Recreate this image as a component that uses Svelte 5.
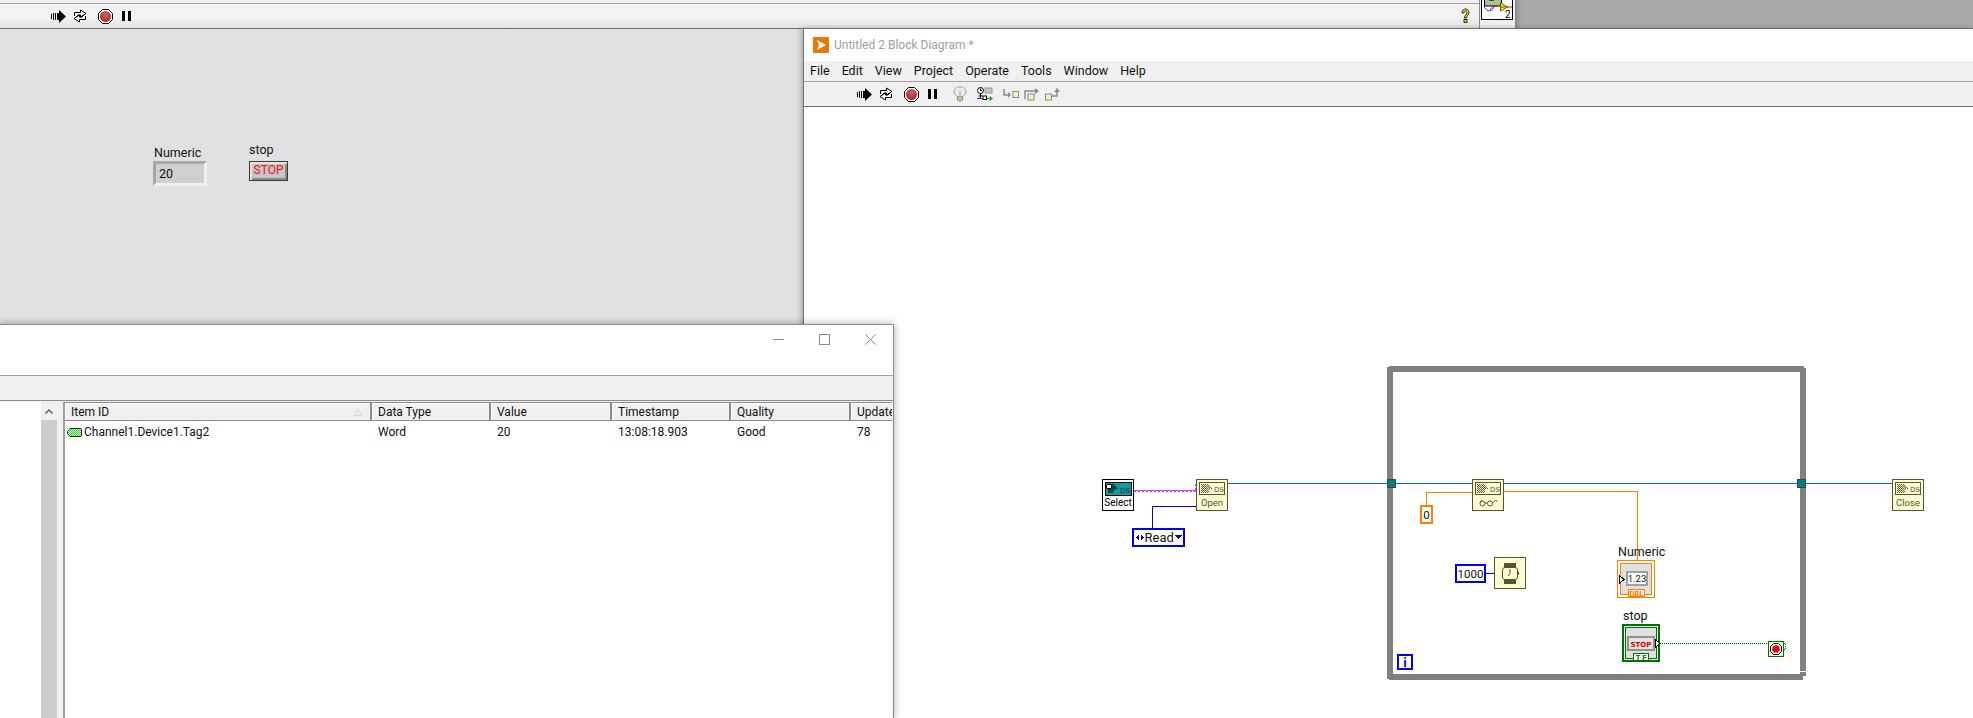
<script>
  const menus = ['File', 'Edit', 'View', 'Project', 'Operate', 'Tools', 'Window', 'Help'];
  const columns = ['Item ID', 'Data Type', 'Value', 'Timestamp', 'Quality', 'Update'];
  const row = ['Channel1.Device1.Tag2', 'Word', '20', '13:08:18.903', 'Good', '78'];
</script>

<svg class="defs" aria-hidden="true">
  <defs>
    <radialGradient id="stopFill" cx="50%" cy="30%" r="70%">
      <stop offset="0" stop-color="#d9605a" />
      <stop offset="1" stop-color="#a82a28" />
    </radialGradient>
    <pattern id="hatch" width="2" height="2" patternUnits="userSpaceOnUse">
      <rect width="2" height="2" fill="#fdfdcf" />
      <rect width="1" height="1" fill="#55553a" />
      <rect x="1" y="1" width="1" height="1" fill="#55553a" />
    </pattern>
    <pattern id="tagHatch" width="2" height="2" patternUnits="userSpaceOnUse">
      <rect width="2" height="2" fill="#3fd43f" />
      <rect width="1" height="1" fill="#c4f5c4" />
      <rect x="1" y="1" width="1" height="1" fill="#c4f5c4" />
    </pattern>
    <symbol id="run" viewBox="0 0 15 13">
      <path d="M0 4h1v5H0zM2 3h1v7H2zM4 3h1v7H4zM6 3h2V0l7 6.500-7 6.500v-3H6z" fill="#000" />
    </symbol>
    <symbol id="loop" viewBox="0 0 16 14">
      <path d="M2.500 7V3.500H8.500V1L14 4.500 8.500 8V6H6L3.500 8.500M13.500 7v3.500H7.500V13L2 9.500 7.500 6v2H10l2.500-2.500" fill="#fff" stroke="#000" />
    </symbol>
    <symbol id="stop" viewBox="0 0 15 15">
      <path d="M4.500.5h6l4 4v6l-4 4h-6l-4-4v-6z" fill="#fff" stroke="#000" />
      <circle cx="7.500" cy="7.500" r="5.500" fill="url(#stopFill)" />
    </symbol>
    <symbol id="pause" viewBox="0 0 9 10">
      <path d="M0 0h3v10H0zM6 0h3v10H6z" fill="#000" />
    </symbol>
    <symbol id="bulb" viewBox="0 0 14 16">
      <path d="M4.500 11C3 9 1 8 1 5.500 1 3 3.500 1 7 1s6 2 6 4.500C13 8 11 9 9.500 11z" fill="#ececec" stroke="#9a9a9a" />
      <path d="M6 5l1 5 1-5" fill="none" stroke="#c0c0c0" />
      <path d="M4.500 11h5v3h-5z" fill="#e8d890" stroke="#8a8a6a" />
      <path d="M5.500 15h3" stroke="#888" />
    </symbol>
    <symbol id="probe" viewBox="0 0 16 14">
      <circle cx="3.500" cy="3.500" r="3" fill="#fff" stroke="#000" />
      <path d="M3.500 1.500v2h1.500M3.500 6.500V11M1.500 9h4" fill="none" stroke="#000" />
      <rect x="8" y="1" width="7" height="5" fill="#c4c4c4" stroke="#9a9a9a" />
      <rect x="6" y="9" width="3.500" height="3.500" fill="#fff" stroke="#000" />
      <path d="M0 11.500h6" stroke="#2030c0" />
      <path d="M9.500 11.500h3" stroke="#109010" />
      <path d="M12.500 9l3.500 2.500-3.500 2.500z" fill="#10a010" />
    </symbol>
    <symbol id="stepInto" viewBox="0 0 16 12">
      <path d="M1 1v6h5" fill="none" stroke="#8a8a8a" stroke-width="1.500" />
      <path d="M5 4l3 3-3 3z" fill="#8a8a8a" />
      <rect x="10" y="3.500" width="5.500" height="6" fill="#f6f2b8" stroke="#8a8a8a" />
    </symbol>
    <symbol id="stepOver" viewBox="0 0 16 13">
      <path d="M1 11V3h10" fill="none" stroke="#8a8a8a" stroke-width="1.500" />
      <path d="M11 0l4 3-4 3z" fill="#8a8a8a" />
      <rect x="4" y="6" width="6" height="6" fill="#f6f2b8" stroke="#8a8a8a" />
    </symbol>
    <symbol id="stepOut" viewBox="0 0 16 13">
      <rect x="0.500" y="6" width="6" height="6" fill="#f6f2b8" stroke="#8a8a8a" />
      <path d="M7 8h5V3" fill="none" stroke="#8a8a8a" stroke-width="1.500" />
      <path d="M9 4l3-4 3 4z" fill="#8a8a8a" />
    </symbol>
    <symbol id="help" viewBox="0 0 9 16">
      <path d="M1 5C1 2 3 1 4.500 1 7 1 8 3 8 4.500 8 7 5.500 7.500 5.500 10H3.500C3.500 7 6 6.500 6 4.500 6 3.500 5.500 3 4.500 3 3.500 3 3 4 3 5z" fill="#f0e020" stroke="#000" stroke-width=".8" />
      <rect x="3" y="11.500" width="3" height="3" fill="#f0e020" stroke="#000" stroke-width=".8" />
    </symbol>
    <symbol id="dsIcon" viewBox="0 0 26 13" overflow="visible">
      <rect x=".5" y=".5" width="25" height="12" fill="none" stroke="#55553a" />
      <path d="M2 2h7l2 2 3 2.500-3 1-2 3.500H2z" fill="url(#hatch)" />
      <text x="15" y="10" class="ds">DS</text>
    </symbol>
  </defs>
</svg>

<div class="desktop">
  <div class="front-panel">
    <div class="fp-strip"></div>
    <div class="fp-toolbar">
      <div class="tools">
        <svg class="i15" viewBox="0 0 15 13"><use href="#run" /></svg>
        <svg class="i16 gap-6" viewBox="0 0 16 14"><use href="#loop" /></svg>
        <svg class="i-stop gap-10" viewBox="0 0 15 15"><use href="#stop" /></svg>
        <svg class="i-pause gap-9" viewBox="0 0 9 10"><use href="#pause" /></svg>
      </div>
      <svg class="i-help" viewBox="0 0 9 16"><use href="#help" /></svg>
      <div class="vi-cell">
        <svg class="vi-icon" viewBox="0 0 32 20">
          <rect x=".5" y="-5" width="31" height="24.500" fill="#fff" stroke="#000" />
          <rect x="3.500" y="-4" width="17" height="10" fill="#b4b89c" stroke="#000" />
          <rect x="8" y="-1" width="5" height="2" fill="#107010" />
          <path d="M3 6.500c3 6 9 6 10-1" fill="none" stroke="#2030b0" />
          <path d="M9 10c2-4 4-4 7-3.500" fill="none" stroke="#d02020" />
          <path d="M19.500 3l7 4-7 4z" fill="#f0f000" stroke="#606000" />
          <path d="M26 7h5M20 7h4" stroke="#d02020" />
          <text x="24" y="18" class="vi-num">2</text>
        </svg>
      </div>
    </div>
    <div class="fp-canvas">
      <div class="control numeric">
        <span class="caption">Numeric</span>
        <div class="num-box">20</div>
      </div>
      <div class="control stop-ctl">
        <span class="caption">stop</span>
        <div class="stop-btn">STOP</div>
      </div>
    </div>
  </div>

  <div class="block-diagram">
    <div class="bd-title">
      <svg class="lv-logo" viewBox="0 0 16 16">
        <rect width="16" height="16" fill="#e9780c" />
        <path d="M4 3l9 5-9 5 2-5z" fill="#fff" />
      </svg>
      <span>Untitled 2 Block Diagram *</span>
    </div>
    <div class="bd-menu">
      {#each menus as m}
        <span class="menu-item">{m}</span>
      {/each}
    </div>
    <div class="bd-toolbar">
      <svg class="i15" viewBox="0 0 15 13"><use href="#run" /></svg>
      <svg class="i16 gap-6" viewBox="0 0 16 14"><use href="#loop" /></svg>
      <svg class="i-stop gap-10" viewBox="0 0 15 15"><use href="#stop" /></svg>
      <svg class="i-pause gap-9" viewBox="0 0 9 10"><use href="#pause" /></svg>
      <svg class="i-bulb" viewBox="0 0 14 16"><use href="#bulb" /></svg>
      <svg class="i-probe" viewBox="0 0 16 14"><use href="#probe" /></svg>
      <svg class="i-step first" viewBox="0 0 16 12"><use href="#stepInto" /></svg>
      <svg class="i-step" viewBox="0 0 16 13"><use href="#stepOver" /></svg>
      <svg class="i-step" viewBox="0 0 16 13"><use href="#stepOut" /></svg>
    </div>

    <svg class="diagram" viewBox="804 107 1169 611" width="1169" height="611" shape-rendering="crispEdges">
      <!-- while loop frame -->
      <rect x="1390" y="369" width="413" height="308" fill="none" stroke="#808080" stroke-width="6" />
      <path d="M1387 366h2v1h-2zM1804 366h2v1.500h-2zM1387 678.500h2v1.500h-2z" fill="#fff" />
      <path d="M1800 671h6v1h-6zM1803 676h3v4h-3z" fill="#fff" />

      <!-- wires -->
      <path d="M1134 490.500h62" fill="none" stroke="#ff30f0" />
      <path d="M1134 491.500h62M1195.500 490v-7M1196.500 490v-7" fill="none" stroke="#ff30f0" stroke-dasharray="2 2" />
      <path d="M1196 506.500h-44v21" fill="none" stroke="#0000f0" />
      <path d="M1228 483.500h159M1396 483.500h76M1504 483.500h293M1806 483.500h86" fill="none" stroke="#007b7b" />
      <path d="M1472 492.500h-46v13M1504 491.500h133.500v68.500" fill="none" stroke="#ff8000" />
      <path d="M1486 573.500h8" stroke="#0000f0" />
      <path d="M1660 643.500h108M1784 643.500h1.500v6h-1.500" fill="none" stroke="#007000" stroke-dasharray="1 1" />

      <!-- tunnels -->
      <rect x="1387.500" y="479.500" width="8" height="8" fill="#007f7f" stroke="#404040" />
      <rect x="1797.500" y="479.500" width="8" height="8" fill="#007f7f" stroke="#404040" />

      <!-- Select -->
      <rect x="1102.500" y="479.500" width="31" height="31" fill="#fff" stroke="#000" />
      <rect x="1105" y="482" width="26" height="13" fill="#109c9c" stroke="#000" />
      <path d="M1108 484h5l2 2 3 2.500-3 1-2 3h-5z" fill="#06484a" />
      <circle cx="1109" cy="486.500" r="2.500" fill="#fff" stroke="#000" />
      <text x="1120" y="492.500" class="ds dark">DS</text>
      <text x="1118" y="506" class="node-label">Select</text>

      <!-- Open -->
      <rect x="1196.500" y="479.500" width="31" height="31" class="node" />
      <use href="#dsIcon" x="1199" y="482" width="26" height="13" />
      <text x="1212" y="506" class="node-label muted">Open</text>

      <!-- Read -->
      <rect x="1133" y="529" width="51" height="17" fill="#fff" stroke="#0000f0" stroke-width="2" />
      <path d="M1139 535l-3 2.500 3 2.500zM1141 535l3 2.500-3 2.500z" fill="#0000c0" />
      <text x="1144.500" y="542" class="term">Read</text>
      <path d="M1175 535h7l-3.500 4z" fill="#0000c0" />

      <!-- Read Property node -->
      <rect x="1472.500" y="479.500" width="31" height="31" class="node" />
      <use href="#dsIcon" x="1475" y="482" width="26" height="13" />
      <g fill="none" stroke="#55553a" shape-rendering="auto">
        <circle cx="1482.500" cy="503.500" r="2.500" />
        <circle cx="1490" cy="503.500" r="2.500" />
        <path d="M1485 503h2.500M1492.500 503l3-2.500 2 1" />
        <path d="M1480 503l2-3" />
      </g>

      <!-- constant 0 -->
      <rect x="1421" y="506" width="11" height="17" fill="#fff" stroke="#ff8000" stroke-width="2" />
      <text x="1426.500" y="519" class="term mid num">0</text>

      <!-- 1000 + wait -->
      <rect x="1456" y="565" width="29" height="17" fill="#fff" stroke="#0000f0" stroke-width="2" />
      <text x="1470.500" y="578" class="term mid num">1000</text>
      <rect x="1494.500" y="557.500" width="31" height="31" class="node" />
      <path d="M1504 563h12v5h-12zM1504 579h12v5h-12z" fill="#55553a" />
      <g shape-rendering="auto">
        <rect x="1502.500" y="567.500" width="15" height="12" rx="2.500" fill="#fdfdcf" stroke="#55553a" />
        <path d="M1510 569v4.500l-2 2.500" fill="none" stroke="#55553a" />
      </g>
      <path d="M1518 572h1v3h-1z" fill="#55553a" />

      <!-- Numeric indicator -->
      <text x="1618" y="556" class="caption-svg">Numeric</text>
      <rect x="1617.500" y="560.500" width="37" height="37" fill="#fff" stroke="#ff8000" />
      <rect x="1620.500" y="563.500" width="31" height="31" fill="#e0e0e0" stroke="#ff8000" />
      <path d="M1619.500 575.500l4.500 4-4.500 4z" fill="#fff" stroke="#000" />
      <rect x="1627" y="572" width="20" height="13" fill="#fff" stroke="#a0a0a0" stroke-width="2" />
      <text x="1637" y="582" class="term mid small">1.23</text>
      <rect x="1628.500" y="589.500" width="16" height="7" fill="#f4f4f4" stroke="#ff8000" />
      <text x="1636.500" y="596" class="tag orange">DBL</text>

      <!-- stop terminal -->
      <text x="1623" y="620" class="caption-svg">stop</text>
      <rect x="1623" y="625" width="36" height="36" fill="#fff" stroke="#007000" stroke-width="2" />
      <rect x="1625.500" y="627.500" width="31" height="31" fill="#e0e0e0" stroke="#007000" />
      <rect x="1628" y="637" width="26" height="13" fill="#e4e4e4" stroke="#909090" stroke-width="2" />
      <text x="1641" y="647" class="stop-label">STOP</text>
      <path d="M1655.500 639.500l4 4-4 4z" fill="#fff" stroke="#000" />
      <rect x="1633.500" y="653.500" width="15" height="7" fill="#fff" stroke="#007000" />
      <text x="1641" y="660" class="tag green">T F</text>

      <!-- loop condition -->
      <rect x="1768.500" y="641.500" width="15" height="15" fill="#fdfdcf" stroke="#007000" />
      <g shape-rendering="auto">
        <path d="M1773.500 643.500h5l3 3v5l-3 3h-5l-3-3v-5z" fill="#fff" stroke="#000" />
        <circle cx="1776" cy="649" r="3.800" fill="#f00000" />
      </g>

      <!-- iteration -->
      <rect x="1398" y="655" width="14" height="14" fill="#fdfdcf" stroke="#0000f0" stroke-width="2" />
      <text x="1405" y="667" class="iter">i</text>

      <!-- Close -->
      <rect x="1892.500" y="479.500" width="31" height="31" class="node" />
      <use href="#dsIcon" x="1895" y="482" width="26" height="13" />
      <text x="1908" y="506" class="node-label muted">Close</text>
    </svg>
  </div>

  <div class="client">
    <div class="client-title">
      <svg class="win-btn" viewBox="0 0 11 11"><path d="M0 5.500h11" stroke="#8c8c8c" /></svg>
      <svg class="win-btn" viewBox="0 0 11 11"><rect x=".5" y=".5" width="10" height="10" fill="none" stroke="#8c8c8c" /></svg>
      <svg class="win-btn" viewBox="0 0 11 11"><path d="M.5.500l10 10M10.500.500l-10 10" stroke="#8c8c8c" /></svg>
    </div>
    <div class="client-toolbar"></div>
    <div class="client-body">
      <div class="tree-pane">
        <div class="scrollbar">
          <div class="scroll-up">
            <svg viewBox="0 0 8 5"><path d="M.5 4.500L4 1l3.500 3.500" fill="none" stroke="#606060" stroke-width="1.500" /></svg>
          </div>
          <div class="scroll-track"></div>
        </div>
      </div>
      <div class="list-pane">
        <div class="list-grid">
          {#each columns as c, i}
            <div class="head-cell">
              <span>{c}</span>
              {#if i === 0}
                <svg class="sort" viewBox="0 0 8 8"><path d="M4 .5L7.500 7.500H.5z" fill="none" stroke="#d8d8d8" /></svg>
              {/if}
            </div>
          {/each}
          {#each row as v, i}
            <div class="body-cell">
              {#if i === 0}
                <svg class="tag-icon" viewBox="0 0 15 9">
                  <path d="M3 .5h11l.5.500v7l-.5.500H3L.5 5.500v-2z" fill="url(#tagHatch)" stroke="#0a3a0a" />
                </svg>
              {/if}
              <span>{v}</span>
            </div>
          {/each}
        </div>
      </div>
    </div>
  </div>
</div>

<style>
  :global(body) {
    margin: 0;
    background: #a9a9a9;
  }

  .defs {
    position: absolute;
    width: 0;
    height: 0;
  }

  .desktop {
    position: relative;
    width: 1973px;
    height: 718px;
    overflow: hidden;
    background: #a9a9a9;
    font-family: Roboto, "Noto Sans", sans-serif;
    font-size: 12.5px;
    color: #111;
  }

  svg {
    display: block;
    flex: none;
  }

  /* front panel window */
  .front-panel {
    position: absolute;
    left: 0;
    top: 0;
    width: 1515px;
    height: 718px;
    display: flex;
    flex-direction: column;
    box-shadow: 2px 0 5px rgba(0, 0, 0, 0.25);
  }

  .fp-strip {
    height: 3px;
    background: #f0f0f0;
    border-bottom: 1px solid #a0a0a0;
  }

  .fp-toolbar {
    height: 24px;
    display: flex;
    align-items: center;
    background: linear-gradient(#f2f2f2 55%, #e4e4e4);
    border-bottom: 1px solid #707070;
  }

  .tools {
    display: flex;
    align-items: center;
    flex: 1;
    padding-left: 51px;
  }

  .i15 { width: 15px; height: 13px; }
  .i16 { width: 16px; height: 14px; }
  .i-stop { width: 15px; height: 15px; }
  .i-pause { width: 9px; height: 10px; }
  .gap-6 { margin-left: 6px; }
  .gap-10 { margin-left: 10px; }
  .gap-9 { margin-left: 9px; }

  .i-help {
    width: 9px;
    height: 16px;
    margin-right: 9px;
  }

  .vi-cell {
    width: 35px;
    align-self: flex-start;
    margin-top: -4px;
    height: 28px;
    border-left: 1px solid #8a8a8a;
    background: #f0f0f0;
  }

  .vi-icon {
    width: 32px;
    height: 20px;
    margin-left: 1px;
  }

  .vi-num {
    font-size: 10px;
    fill: #000;
  }

  .fp-canvas {
    flex: 1;
    position: relative;
    background: #e1e1e1;
  }

  .control {
    position: absolute;
  }

  .caption {
    display: block;
    line-height: 16px;
    font-size: 12.5px;
  }

  .numeric {
    left: 154px;
    top: 116px;
  }

  .num-box {
    width: 54px;
    height: 25px;
    box-sizing: border-box;
    margin-left: -1px;
    padding-left: 3px;
    line-height: 19px;
    background: #d0d0d0;
    border: 3px solid;
    border-color: #a8a8a8 #f0f0f0 #f0f0f0 #a8a8a8;
    font-size: 12.5px;
  }

  .stop-ctl {
    left: 249px;
    top: 113px;
  }

  .stop-btn {
    width: 39px;
    height: 20px;
    box-sizing: border-box;
    margin-top: 3px;
    text-align: center;
    line-height: 17px;
    color: #f01020;
    font-size: 12px;
    border: 1px solid #3a3a3a;
    background: #c6c6c6;
    box-shadow: inset 2px 2px 0 #e4e4e4, inset -2px -2px 0 #888;
  }

  /* block diagram window */
  .block-diagram {
    position: absolute;
    left: 803px;
    top: 28px;
    width: 1170px;
    height: 690px;
    box-sizing: border-box;
    border-top: 1px solid #707070;
    border-left: 1px solid #707070;
    background: #fff;
    display: flex;
    flex-direction: column;
    box-shadow: -2px 0 5px rgba(0, 0, 0, 0.25);
  }

  .bd-title {
    height: 32px;
    display: flex;
    align-items: center;
    gap: 5px;
    padding-left: 9px;
    color: #a0a0a0;
    font-size: 12px;
  }

  .lv-logo {
    width: 16px;
    height: 16px;
  }

  .bd-menu {
    height: 20px;
    box-sizing: border-box;
    display: flex;
    align-items: center;
    padding-bottom: 2px;
    background: #f0f0f0;
  }

  .menu-item {
    padding: 0 6px;
  }

  .bd-toolbar {
    height: 24px;
    display: flex;
    align-items: center;
    padding-left: 53px;
    background: #f0f0f0;
    border-top: 1px solid #a0a0a0;
    border-bottom: 1px solid #707070;
  }

  .i-bulb {
    width: 14px;
    height: 16px;
    margin-left: 16px;
  }

  .i-probe {
    width: 16px;
    height: 14px;
    margin-left: 10px;
  }

  .i-step {
    width: 16px;
    height: 13px;
    margin-left: 5px;
  }

  .i-step.first {
    margin-left: 10px;
    height: 12px;
  }

  .diagram {
    flex: none;
  }

  .node {
    fill: #fdfdcf;
    stroke: #55553a;
  }

  .ds {
    font-family: "DejaVu Sans", sans-serif;
    font-size: 7px;
    fill: #55553a;
  }

  .ds.dark {
    fill: #062a2a;
  }

  .node-label {
    font-size: 10px;
    text-anchor: middle;
    fill: #000;
    shape-rendering: auto;
  }

  .node-label.muted {
    font-size: 9.5px;
    fill: #55553a;
  }

  .term {
    font-size: 13px;
    fill: #111;
  }

  .term.mid {
    text-anchor: middle;
  }

  .term.num {
    font-size: 11.5px;
  }

  .term.small {
    font-size: 9.5px;
  }

  .caption-svg {
    font-size: 12.5px;
    fill: #111;
  }

  .tag {
    font-size: 8px;
    font-weight: 700;
    text-anchor: middle;
  }

  .tag.orange { fill: #ff8000; }
  .tag.green { fill: #007000; }

  .stop-label {
    font-family: "DejaVu Sans", sans-serif;
    font-size: 7px;
    font-weight: 700;
    text-anchor: middle;
    fill: #e00000;
  }

  .iter {
    font-size: 13px;
    font-weight: 700;
    text-anchor: middle;
    fill: #0000f0;
  }

  /* client window */
  .client {
    position: absolute;
    left: -1px;
    top: 324px;
    width: 895px;
    height: 394px;
    box-sizing: border-box;
    border-top: 1px solid #8c8c8c;
    border-right: 1px solid #8c8c8c;
    background: #fff;
    display: flex;
    flex-direction: column;
    box-shadow: 0 0 8px rgba(0, 0, 0, 0.35);
  }

  .client-title {
    height: 51px;
    display: flex;
    justify-content: flex-end;
    align-items: flex-start;
    gap: 35px;
    padding: 9px 17px 0 0;
    box-sizing: border-box;
    border-bottom: 1px solid #a0a0a0;
  }

  .win-btn {
    width: 11px;
    height: 11px;
  }

  .client-toolbar {
    height: 24px;
    background: #f0f0f0;
    border-bottom: 1px solid #8c8c8c;
  }

  .client-body {
    flex: 1;
    min-height: 0;
    display: flex;
    background: #f0f0f0;
    padding-top: 1px;
    font-size: 12px;
  }

  .tree-pane {
    width: 58px;
    background: #fff;
    display: flex;
    justify-content: flex-end;
  }

  .scrollbar {
    width: 16px;
    display: flex;
    flex-direction: column;
  }

  .scroll-up {
    height: 18px;
    background: #f0f0f0;
    display: flex;
    align-items: center;
    justify-content: center;
  }

  .scroll-up svg {
    width: 8px;
    height: 5px;
  }

  .scroll-track {
    flex: 1;
    background: #cdcdcd;
  }

  .list-pane {
    margin-left: 6px;
    width: 829px;
    box-sizing: border-box;
    background: #fff;
    border-top: 1px solid #8c8c8c;
    border-left: 2px solid #a0a0a0;
    overflow: hidden;
  }

  .list-grid {
    display: grid;
    grid-template-columns: 307px 119px 121px 119px 120px 120px;
    grid-template-rows: 18px 22px;
    white-space: nowrap;
  }

  .head-cell {
    display: flex;
    align-items: center;
    justify-content: space-between;
    padding: 0 8px 0 6px;
    box-sizing: border-box;
    background: #f0f0f0;
    border-right: 2px solid #8c8c8c;
    border-bottom: 1px solid #8c8c8c;
    box-shadow: inset 1px 1px 0 #fff;
  }

  .sort {
    width: 8px;
    height: 8px;
  }

  .body-cell {
    display: flex;
    align-items: center;
    gap: 2px;
    padding-left: 6px;
  }

  .body-cell:nth-child(7) {
    padding-left: 2px;
  }

  .tag-icon {
    width: 15px;
    height: 9px;
  }
</style>
